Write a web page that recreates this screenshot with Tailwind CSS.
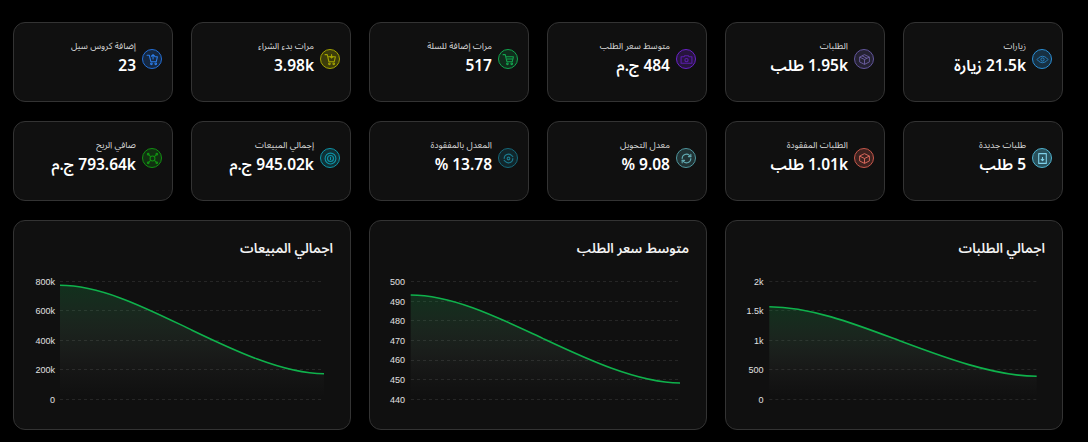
<!DOCTYPE html>
<html lang="ar" dir="rtl">
<head>
<meta charset="utf-8">
<script src="https://cdn.jsdelivr.net/npm/@tailwindcss/browser@4"></script>
</head>
<body class="bg-black m-0 overflow-hidden font-['Noto_Sans','Noto_Sans_Arabic','DejaVu_Sans',sans-serif]">
<main class="w-[1088px] h-[442px] pt-[22px] pl-[13px] pr-[25px] flex flex-col gap-[19px]">

<section class="grid grid-cols-6 gap-x-[18px] gap-y-[19px]">

  <article class="h-[80px] rounded-xl border border-[#333] bg-[#101010] flex items-start gap-[6px] pt-[16px] pr-[10px]">
    <span class="mt-[10px] w-5 h-5 shrink-0 rounded-full border border-[#2b8fd6] bg-[#2b8fd6]/25 text-[#2b8fd6] flex items-center justify-center">
      <svg class="w-[13px] h-[13px]" viewBox="0 0 24 24" fill="none" stroke="currentColor" stroke-width="1.500"><path d="M2 12s4-6 10-6 10 6 10 6-4 6-10 6-10-6-10-6z"/><circle cx="12" cy="12" r="3"/></svg>
    </span>
    <div><p class="text-[9px] leading-[14px] text-[#d8d8d8]">زيارات</p><p class="text-[15.5px] leading-[24px] font-semibold text-white">21.5k زيارة</p></div>
  </article>

  <article class="h-[80px] rounded-xl border border-[#333] bg-[#101010] flex items-start gap-[6px] pt-[16px] pr-[10px]">
    <span class="mt-[10px] w-5 h-5 shrink-0 rounded-full border border-[#62569c] bg-[#62569c]/25 text-[#6f63a8] flex items-center justify-center">
      <svg class="w-[13px] h-[13px]" viewBox="0 0 24 24" fill="none" stroke="currentColor" stroke-width="1.600" stroke-linejoin="round"><path d="M12 3l9 4.500v9L12 21l-9-4.500v-9z"/><path d="M3 7.500l9 4.500 9-4.500M12 12v9M7.500 5.200l9 4.600"/></svg>
    </span>
    <div><p class="text-[9px] leading-[14px] text-[#d8d8d8]">الطلبات</p><p class="text-[15.5px] leading-[24px] font-semibold text-white">1.95k طلب</p></div>
  </article>

  <article class="h-[80px] rounded-xl border border-[#333] bg-[#101010] flex items-start gap-[6px] pt-[16px] pr-[10px]">
    <span class="mt-[10px] w-5 h-5 shrink-0 rounded-full border border-[#6a22c9] bg-[#6a22c9]/25 text-[#5a1eaa] flex items-center justify-center">
      <svg class="w-[13px] h-[13px]" viewBox="0 0 24 24" fill="none" stroke="currentColor" stroke-width="2" stroke-linejoin="round"><path d="M2 7h5l2-2h6l2 2h5v12H2z"/><circle cx="12" cy="13" r="3"/></svg>
    </span>
    <div><p class="text-[9px] leading-[14px] text-[#d8d8d8]">متوسط سعر الطلب</p><p class="text-[15.5px] leading-[24px] font-semibold text-white">484 ج.م</p></div>
  </article>

  <article class="h-[80px] rounded-xl border border-[#333] bg-[#101010] flex items-start gap-[6px] pt-[16px] pr-[10px]">
    <span class="mt-[10px] w-5 h-5 shrink-0 rounded-full border border-[#12a54e] bg-[#12a54e]/20 text-[#12a54e] flex items-center justify-center">
      <svg class="w-[13px] h-[13px]" viewBox="0 0 24 24" fill="none" stroke="currentColor" stroke-width="2" stroke-linejoin="round" stroke-linecap="round"><path d="M2 3h4l3 13h10l2-9H7"/><circle cx="10" cy="20" r="1.500"/><circle cx="18" cy="20" r="1.500"/><path d="M10 11h9"/></svg>
    </span>
    <div><p class="text-[9px] leading-[14px] text-[#d8d8d8]">مرات إضافة للسلة</p><p class="text-[15.5px] leading-[24px] font-semibold text-white">517</p></div>
  </article>

  <article class="h-[80px] rounded-xl border border-[#333] bg-[#101010] flex items-start gap-[6px] pt-[16px] pr-[10px]">
    <span class="mt-[10px] w-5 h-5 shrink-0 rounded-full border border-[#a3a300] bg-[#a3a300]/30 text-[#a3a300] flex items-center justify-center">
      <svg class="w-[13px] h-[13px]" viewBox="0 0 24 24" fill="none" stroke="currentColor" stroke-width="2" stroke-linejoin="round" stroke-linecap="round"><path d="M2 3h4l3 13h10l2-9H7"/><circle cx="10" cy="20" r="1.500"/><circle cx="18" cy="20" r="1.500"/><path d="M14 3v6M11.500 6.500L14 9l2.500-2.500"/></svg>
    </span>
    <div><p class="text-[9px] leading-[14px] text-[#d8d8d8]">مرات بدء الشراء</p><p class="text-[15.5px] leading-[24px] font-semibold text-white">3.98k</p></div>
  </article>

  <article class="h-[80px] rounded-xl border border-[#333] bg-[#101010] flex items-start gap-[6px] pt-[16px] pr-[10px]">
    <span class="mt-[10px] w-5 h-5 shrink-0 rounded-full border border-[#2470d8] bg-[#2470d8]/25 text-[#2b7ce8] flex items-center justify-center">
      <svg class="w-[13px] h-[13px]" viewBox="0 0 24 24" fill="none" stroke="currentColor" stroke-width="2" stroke-linejoin="round" stroke-linecap="round"><path d="M2 4h4l3 12h10l2-9h-4"/><circle cx="10" cy="20" r="1.500"/><circle cx="18" cy="20" r="1.500"/><path d="M13 11V3M10 6l3-3 3 3"/></svg>
    </span>
    <div><p class="text-[9px] leading-[14px] text-[#d8d8d8]">إضافة كروس سيل</p><p class="text-[15.5px] leading-[24px] font-semibold text-white">23</p></div>
  </article>

  <article class="h-[80px] rounded-xl border border-[#333] bg-[#101010] flex items-start gap-[6px] pt-[16px] pr-[10px]">
    <span class="mt-[10px] w-5 h-5 shrink-0 rounded-full border border-[#4fb3d0] bg-[#4fb3d0]/40 text-[#7fd0e8] flex items-center justify-center">
      <svg class="w-[13px] h-[13px]" viewBox="0 0 24 24" fill="none" stroke="currentColor" stroke-width="2" stroke-linejoin="round"><path d="M5 3h14v18H5z"/><path d="M12 9v7M9 13l3 3 3-3"/></svg>
    </span>
    <div><p class="text-[9px] leading-[14px] text-[#d8d8d8]">طلبات جديدة</p><p class="text-[15.5px] leading-[24px] font-semibold text-white">5 طلب</p></div>
  </article>

  <article class="h-[80px] rounded-xl border border-[#333] bg-[#101010] flex items-start gap-[6px] pt-[16px] pr-[10px]">
    <span class="mt-[10px] w-5 h-5 shrink-0 rounded-full border border-[#c8584c] bg-[#c8584c]/25 text-[#d8685c] flex items-center justify-center">
      <svg class="w-[13px] h-[13px]" viewBox="0 0 24 24" fill="none" stroke="currentColor" stroke-width="1.800" stroke-linejoin="round"><path d="M12 3l9 4.500v9L12 21l-9-4.500v-9z"/><path d="M3 7.500l9 4.500 9-4.500M12 12v9"/></svg>
    </span>
    <div><p class="text-[9px] leading-[14px] text-[#d8d8d8]">الطلبات المفقودة</p><p class="text-[15.5px] leading-[24px] font-semibold text-white">1.01k طلب</p></div>
  </article>

  <article class="h-[80px] rounded-xl border border-[#333] bg-[#101010] flex items-start gap-[6px] pt-[16px] pr-[10px]">
    <span class="mt-[10px] w-5 h-5 shrink-0 rounded-full border border-[#4f969e] bg-[#4f969e]/25 text-[#62aab2] flex items-center justify-center">
      <svg class="w-[13px] h-[13px]" viewBox="0 0 24 24" fill="none" stroke="currentColor" stroke-width="2" stroke-linecap="round"><path d="M4 12a8 8 0 0 1 13.500-5.800L20 8.500M20 12a8 8 0 0 1-13.500 5.800L4 15.500"/><path d="M20 4v4.500h-4.500M4 20v-4.500h4.500"/></svg>
    </span>
    <div><p class="text-[9px] leading-[14px] text-[#d8d8d8]">معدل التحويل</p><p class="text-[15.5px] leading-[24px] font-semibold text-white">9.08 %</p></div>
  </article>

  <article class="h-[80px] rounded-xl border border-[#333] bg-[#101010] flex items-start gap-[6px] pt-[16px] pr-[10px]">
    <span class="mt-[10px] w-5 h-5 shrink-0 rounded-full border border-[#15687a] bg-[#15687a]/25 text-[#1b7a8e] flex items-center justify-center">
      <svg class="w-[13px] h-[13px]" viewBox="0 0 24 24" fill="none" stroke="currentColor" stroke-width="2" stroke-linecap="round"><path d="M4 12a8 8 0 0 1 13.500-5.800L20 8.500M20 12a8 8 0 0 1-13.500 5.800L4 15.500"/><circle cx="12" cy="12" r="2.500"/></svg>
    </span>
    <div><p class="text-[9px] leading-[14px] text-[#d8d8d8]">المعدل بالمفقودة</p><p class="text-[15.5px] leading-[24px] font-semibold text-white">13.78 %</p></div>
  </article>

  <article class="h-[80px] rounded-xl border border-[#333] bg-[#101010] flex items-start gap-[6px] pt-[16px] pr-[10px]">
    <span class="mt-[10px] w-5 h-5 shrink-0 rounded-full border border-[#0e95a8] bg-[#0e95a8]/25 text-[#0e95a8] flex items-center justify-center">
      <svg class="w-[13px] h-[13px]" viewBox="0 0 24 24" fill="none" stroke="currentColor" stroke-width="2"><circle cx="12" cy="12" r="10"/><circle cx="12" cy="12" r="5.500"/><path d="M12 9v6"/></svg>
    </span>
    <div><p class="text-[9px] leading-[14px] text-[#d8d8d8]">إجمالي المبيعات</p><p class="text-[15.5px] leading-[24px] font-semibold text-white">945.02k ج.م</p></div>
  </article>

  <article class="h-[80px] rounded-xl border border-[#333] bg-[#101010] flex items-start gap-[6px] pt-[16px] pr-[10px]">
    <span class="mt-[10px] w-5 h-5 shrink-0 rounded-full border border-[#129012] bg-[#129012]/25 text-[#129012] flex items-center justify-center">
      <svg class="w-[13px] h-[13px]" viewBox="0 0 24 24" fill="none" stroke="currentColor" stroke-width="2"><circle cx="12" cy="12" r="4.500"/><path d="M8.500 8.500L4 4M15.500 8.500L20 4M8.500 15.500L4 20M15.500 15.500L20 20"/><circle cx="4" cy="4" r="1.500"/><circle cx="20" cy="4" r="1.500"/><circle cx="4" cy="20" r="1.500"/><circle cx="20" cy="20" r="1.500"/></svg>
    </span>
    <div><p class="text-[9px] leading-[14px] text-[#d8d8d8]">صافي الربح</p><p class="text-[15.5px] leading-[24px] font-semibold text-white">793.64k ج.م</p></div>
  </article>
</section>

<section class="grid grid-cols-3 gap-x-[18px]">

  <article class="h-[210px] rounded-xl border border-[#333] bg-[#101010] pt-[17px]">
    <h2 class="px-[17px] text-[13.5px] leading-[20px] font-semibold text-[#f2f2f2]">اجمالي الطلبات</h2>
    <svg class="block mt-[12px] w-full h-[140px] overflow-visible [direction:ltr] font-['Liberation_Sans',sans-serif]" fill="#e0e0e0" font-size="9">
      <defs>
        <linearGradient id="g1" x1="0" y1="0" x2="0" y2="1"><stop offset="0" stop-color="#16a34a" stop-opacity="0.22"/><stop offset="0.7" stop-color="#a0b0a0" stop-opacity="0.05"/><stop offset="1" stop-color="#999" stop-opacity="0"/></linearGradient>
      </defs>
      <g transform="translate(0,-270)">
        <g stroke="#262626" stroke-dasharray="3 3"><path d="M43.300 281.500H311M43.300 310.500H311M43.300 340.500H311M43.300 369.500H311M43.300 399.500H311"/></g>
        <path d="M43.300 306.700C86.100 306.700 134.200 326 174.300 341C214.400 356 267.900 376.300 310.700 376.300V397H43.300Z" fill="url(#g1)"/>
        <path d="M43.300 306.700C86.100 306.700 134.200 326 174.300 341C214.400 356 267.900 376.300 310.700 376.300" fill="none" stroke="#0fb24c" stroke-width="1.600"/>
        <g text-anchor="end"><text x="37.500" y="284.500">2k</text><text x="37.500" y="314">1.5k</text><text x="37.500" y="343.500">1k</text><text x="37.500" y="373">500</text><text x="37.500" y="402.500">0</text></g>
      </g>
    </svg>
  </article>

  <article class="h-[210px] rounded-xl border border-[#333] bg-[#101010] pt-[17px]">
    <h2 class="px-[17px] text-[13.5px] leading-[20px] font-semibold text-[#f2f2f2]">متوسط سعر الطلب</h2>
    <svg class="block mt-[12px] w-full h-[140px] overflow-visible [direction:ltr] font-['Liberation_Sans',sans-serif]" fill="#e0e0e0" font-size="9">
      <defs>
        <linearGradient id="g2" x1="0" y1="0" x2="0" y2="1"><stop offset="0" stop-color="#16a34a" stop-opacity="0.22"/><stop offset="0.7" stop-color="#a0b0a0" stop-opacity="0.05"/><stop offset="1" stop-color="#999" stop-opacity="0"/></linearGradient>
      </defs>
      <g transform="translate(0,-270)">
        <g stroke="#262626" stroke-dasharray="3 3"><path d="M41 281.500H310M41 301.500H310M41 320.500H310M41 340.500H310M41 360.500H310M41 379.500H310M41 399.500H310"/></g>
        <path d="M40.700 295C83.800 295 132.300 319.500 172.700 338.400C213 357.300 266.900 383 310 383V397H40.700Z" fill="url(#g2)"/>
        <path d="M40.700 295C83.800 295 132.300 319.500 172.700 338.400C213 357.300 266.900 383 310 383" fill="none" stroke="#0fb24c" stroke-width="1.600"/>
        <g text-anchor="end"><text x="35" y="284.500">500</text><text x="35" y="304.500">490</text><text x="35" y="323.800">480</text><text x="35" y="343.500">470</text><text x="35" y="363.200">460</text><text x="35" y="382.800">450</text><text x="35" y="402.500">440</text></g>
      </g>
    </svg>
  </article>

  <article class="h-[210px] rounded-xl border border-[#333] bg-[#101010] pt-[17px]">
    <h2 class="px-[17px] text-[13.5px] leading-[20px] font-semibold text-[#f2f2f2]">اجمالي المبيعات</h2>
    <svg class="block mt-[12px] w-full h-[140px] overflow-visible [direction:ltr] font-['Liberation_Sans',sans-serif]" fill="#e0e0e0" font-size="9">
      <defs>
        <linearGradient id="g3" x1="0" y1="0" x2="0" y2="1"><stop offset="0" stop-color="#16a34a" stop-opacity="0.22"/><stop offset="0.7" stop-color="#a0b0a0" stop-opacity="0.05"/><stop offset="1" stop-color="#999" stop-opacity="0"/></linearGradient>
      </defs>
      <g transform="translate(0,-270)">
        <g stroke="#262626" stroke-dasharray="3 3"><path d="M46 281.500H310M46 310.500H310M46 340.500H310M46 369.500H310M46 399.500H310"/></g>
        <path d="M46 285.300C88.200 285.300 135.800 309.900 175.400 328.900C215 347.900 267.800 373.700 310 373.700V397H46Z" fill="url(#g3)"/>
        <path d="M46 285.300C88.200 285.300 135.800 309.900 175.400 328.900C215 347.900 267.800 373.700 310 373.700" fill="none" stroke="#0fb24c" stroke-width="1.600"/>
        <g text-anchor="end"><text x="41" y="284.500">800k</text><text x="41" y="314">600k</text><text x="41" y="343.500">400k</text><text x="41" y="373">200k</text><text x="41" y="402.500">0</text></g>
      </g>
    </svg>
  </article>
</section>
</main>
</body>
</html>
